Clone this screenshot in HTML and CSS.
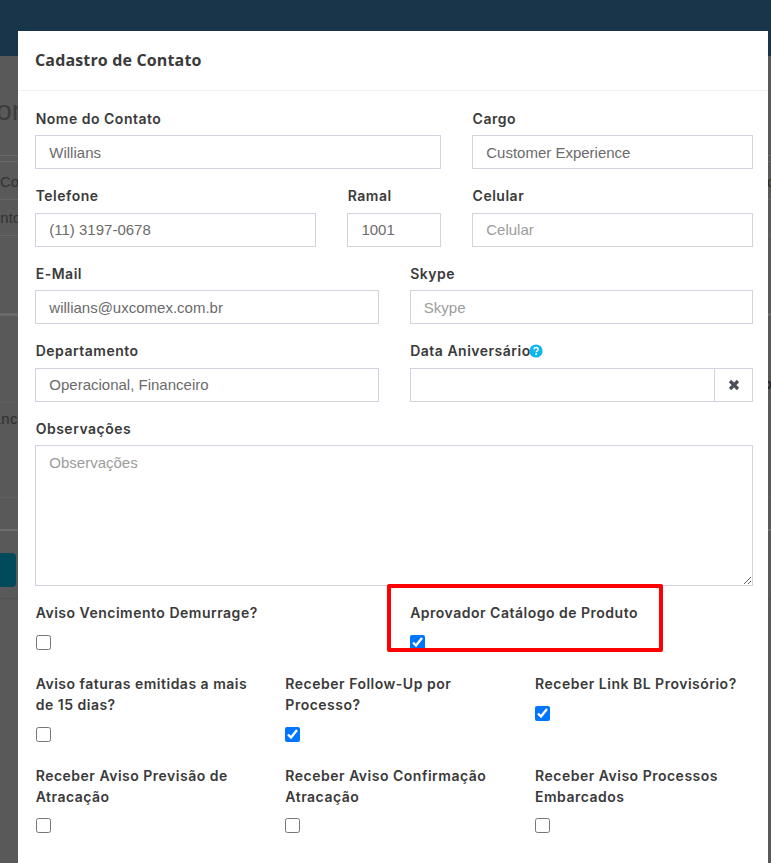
FILE: index.html
```html
<!DOCTYPE html>
<html lang="pt-BR">
<head>
<meta charset="utf-8">
<title>Cadastro de Contato</title>
<link rel="stylesheet" href="styles.css">
</head>
<body>
<div class="page">
  <header class="topbar"></header>
  <main class="behind">
    <div class="behind-title"><span>Contatos</span></div>
    <div class="behind-rule"></div>
    <div class="behind-row first"><span class="cut-cor">Contato</span><span class="cut-o">o</span></div>
    <div class="behind-row"><span class="cut-nto">Ponto</span></div>
    <div class="behind-gap"></div>
    <div class="behind-band"></div>
    <div class="behind-gap2"><span class="cut-x">x</span></div>
    <div class="behind-row tall"><span class="cut-nc">Financeiro</span></div>
    <div class="behind-foot"></div>
    <div class="behind-btn-row"><div class="behind-btn"></div></div>
  </main>

  <div class="modal" role="dialog">
    <div class="modal-header"><h1>Cadastro de Contato</h1></div>
    <form class="modal-body">
      <div class="grid">
        <div class="group s7"><label>Nome do Contato</label><input type="text" value="Willians"></div>
        <div class="group s5"><label>Cargo</label><input type="text" value="Customer Experience"></div>

        <div class="group s5"><label>Telefone</label><input type="text" value="(11) 3197-0678"></div>
        <div class="group s2"><label>Ramal</label><input type="text" value="1001"></div>
        <div class="group s5"><label>Celular</label><input type="text" placeholder="Celular"></div>

        <div class="group s6"><label>E-Mail</label><input type="text" value="willians@uxcomex.com.br"></div>
        <div class="group s6"><label>Skype</label><input type="text" placeholder="Skype"></div>

        <div class="group s6"><label>Departamento</label><input type="text" value="Operacional, Financeiro"></div>
        <div class="group s6">
          <label class="with-help">Data Aniversário<svg class="help" viewBox="0 0 14 14" width="14" height="14" aria-hidden="true"><circle cx="7" cy="7" r="6.6" fill="#0fb5ee"/><path d="M4.9 5.4C5 4.2 5.9 3.6 7 3.6c1.2 0 2.1.7 2.1 1.8 0 .8-.4 1.2-1.1 1.6-.6.4-.8.6-.8 1.2" fill="none" stroke="#fff" stroke-width="1.5"/><rect x="6.3" y="9.3" width="1.6" height="1.6" fill="#fff"/></svg></label>
          <div class="input-group">
            <input type="text">
            <span class="addon"><svg viewBox="0 0 12 12" width="12" height="12" aria-hidden="true"><path d="M2 2l8 8M10 2l-8 8" stroke="#4a4f57" stroke-width="3.2" fill="none"/></svg></span>
          </div>
        </div>

        <div class="group s12"><label>Observações</label><textarea placeholder="Observações"></textarea></div>

        <div class="group s6 check"><label>Aviso Vencimento Demurrage?</label><input type="checkbox"></div>
        <div class="group s6 check"><label>Aprovador Catálogo de Produto</label><input type="checkbox" checked></div>

        <div class="group s4 check"><label>Aviso faturas emitidas a mais de 15 dias?</label><input type="checkbox"></div>
        <div class="group s4 check"><label>Receber Follow-Up por Processo?</label><input type="checkbox" checked></div>
        <div class="group s4 check"><label>Receber Link BL Provisório?</label><input type="checkbox" checked></div>

        <div class="group s4 check"><label>Receber Aviso Previsão de Atracação</label><input type="checkbox"></div>
        <div class="group s4 check"><label>Receber Aviso Confirmação Atracação</label><input type="checkbox"></div>
        <div class="group s4 check"><label>Receber Aviso Processos Embarcados</label><input type="checkbox"></div>
      </div>
    </form>
  </div>
  <div class="highlight"></div>
</div>
</body>
</html>
```
FILE: styles.css
```css
* { box-sizing: border-box; }
html, body { margin: 0; padding: 0; height: 100%; overflow: hidden; }
body { font-family: "Liberation Sans", Arial, sans-serif; color: #3a3a3a; }

.page { position: relative; width: 771px; height: 863px; overflow: hidden; background: #595959; }

.topbar { height: 56px; background: #18354a; }

.behind { color: #333; font-size: 16px; line-height: 20px; }
.behind-title { height: 99px; padding-top: 38px; overflow: hidden; font-size: 28px; line-height: 34px; color: #3c3c3c; }
.behind-title span { display: block; margin-left: -24px; }
.behind-rule { height: 7px; border-top: 1px solid #6a6a6a; border-bottom: 1px solid #6a6a6a; }
.behind-row { position: relative; height: 36px; padding-top: 8px; border-bottom: 1px solid #666; overflow: hidden; white-space: nowrap; font-size: 15px; }
.behind-row.first { height: 38px; padding-top: 10px; }
.cut-cor { display: block; margin-left: 0; color: #333; }
.cut-nto { display: block; margin-left: -18px; color: #333; }
.cut-o { position: absolute; left: 767px; top: 10px; color: #3a2a14; }
.behind-gap { height: 77px; }
.behind-band { height: 3px; background: #6a6a6a; }
.behind-gap2 { position: relative; height: 87px; border-bottom: 1px solid #5f5f5f; font-size: 15px; }
.behind-row.tall { height: 95px; padding-top: 6px; border-bottom-color: #626262; }
.cut-nc { display: block; margin-left: -30px; color: #2e2e2e; letter-spacing: 0.5px; }
.cut-x { position: absolute; left: 767px; top: 58px; color: #222; font-weight: 700; }
.behind-foot { height: 33px; border-bottom: 2px solid #6e6e6e; }
.behind-btn-row { height: 68px; padding-top: 22px; border-bottom: 1px solid #505050; }
.behind-btn { width: 16px; height: 34px; background: #004a5c; border-radius: 0 4px 4px 0; }

.modal { position: absolute; left: 18px; top: 31px; right: 3px; bottom: 0; background: #fff; overflow: hidden; }
.modal-header { height: 60px; padding: 0 16px 2px 17px; display: flex; align-items: center; border-bottom: 1px solid #f1f1f3; }
.modal-header h1 { margin: 0; font-family: "Open Sans", sans-serif; font-size: 16px; font-weight: 700; letter-spacing: 0.15px; color: #3a3a3a; line-height: 20px; }

.modal-body { padding: 16.5px 14.7px 0 17.3px; }
.grid { display: grid; grid-template-columns: repeat(12, minmax(0, 1fr)); column-gap: 31px; align-items: start; }
.s2 { grid-column: span 2; }
.s4 { grid-column: span 4; }
.s5 { grid-column: span 5; }
.s6 { grid-column: span 6; }
.s7 { grid-column: span 7; }
.s12 { grid-column: span 12; }

.group { margin-bottom: 16px; min-width: 0; }
.group label { display: block; padding-left: 0.4px; font-family: Inter, sans-serif; font-size: 14px; font-weight: 600; letter-spacing: 0.5px; line-height: 21px; color: #3a3a3a; margin-bottom: 6.75px; }

.group input[type="text"], .group textarea {
  display: block; width: 100%; height: 33.75px; padding: 0 13px;
  border: 1px solid #d0d4df; border-radius: 0; outline: 0; background: #fff;
  font-family: "Liberation Sans", Arial, sans-serif; font-size: 15px; color: #6b6b6b;
}
.group textarea { height: 141px; padding: 8px 13px; resize: both; }
.group ::placeholder { color: #9c9c9c; opacity: 1; }

.with-help { display: flex !important; align-items: center; }
.help { flex: none; margin-left: -1.5px; }

.input-group { display: flex; height: 33.75px; }
.group .input-group input[type="text"] { flex: 1; width: auto; min-width: 0; height: 33.75px; border-right: 0; }
.addon { flex: none; width: 39px; display: flex; align-items: center; justify-content: center; border: 1px solid #d0d4df; background: #fff; }

.check input[type="checkbox"] { display: block; width: 15px; height: 15px; margin: 11.7px 0 7.05px 0.4px; accent-color: #0075ff; }

.highlight { position: absolute; left: 387px; top: 584px; width: 276px; height: 68px; border: 4px solid #ff0000; border-radius: 2px; pointer-events: none; }
```
